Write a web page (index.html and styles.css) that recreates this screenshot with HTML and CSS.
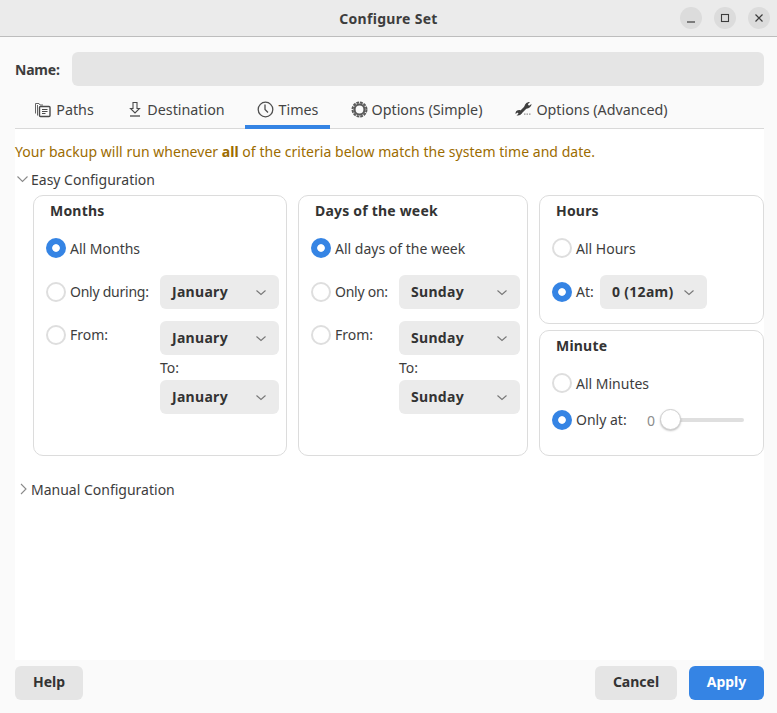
FILE: index.html
```html
<!DOCTYPE html>
<html lang="en">
<head>
    <meta charset="UTF-8">
    <meta name="viewport" content="width=device-width, initial-scale=1.0">
    <title>Configure Set</title>
    <link rel="stylesheet" href="styles.css">
</head>
<body>
    <header class="titlebar">
        <h1>Configure Set</h1>
        <div class="window-buttons">
            <span class="window-button"><svg width="16" height="16" viewBox="0 0 16 16"><path d="M4 12h8" stroke="#3d3d3d" stroke-width="1.2"/></svg></span>
            <span class="window-button"><svg width="16" height="16" viewBox="0 0 16 16"><rect x="4.5" y="4.5" width="7" height="7" fill="none" stroke="#3d3d3d" stroke-width="1.1"/></svg></span>
            <span class="window-button"><svg width="16" height="16" viewBox="0 0 16 16"><path d="M4.5 4.5l7 7M11.5 4.5l-7 7" stroke="#3d3d3d" stroke-width="1.2"/></svg></span>
        </div>
    </header>
    <main class="dialog">
        <div class="name-row">
            <label class="name-label">Name:</label>
            <div class="name-input"></div>
        </div>
        <nav class="tabs">
            <div class="tab tab-paths">
                <svg width="17" height="17" viewBox="0 0 17 17" fill="none" stroke="#666"><path d="M1.500 12.500v-10h3.500l1 1.500h3"/><path d="M3.500 14.500v-10.500"/><rect x="5.500" y="5.500" width="10.500" height="10" rx="1" stroke="#4a4a4a" stroke-width="1.4"/><path d="M8 8.500h5.500M8 10.500h5.500M8 12.500h3.500" stroke="#4a4a4a"/></svg>
                Paths
            </div>
            <div class="tab tab-destination">
                <svg width="14" height="17" viewBox="0 0 14 17" fill="none" stroke="#4a4a4a" stroke-width="1.1"><path d="M5 1.500h4v6h2.500L7 12 2.500 7.500H5z"/><path d="M2 15h10" stroke-width="1.3"/></svg>
                Destination
            </div>
            <div class="tab tab-times active">
                <svg width="17" height="17" viewBox="0 0 17 17" fill="none" stroke="#4f4f4f"><circle cx="8.500" cy="8.500" r="7.300" stroke-width="1.300"/><path d="M8 3.500v5l3 3" stroke-width="1.300"/></svg>
                Times
            </div>
            <div class="tab tab-simple">
                <svg width="17" height="17" viewBox="0 0 17 17" fill="none" stroke="#5a5a5a"><circle cx="8.500" cy="8.500" r="5" stroke-width="2.200"/><circle cx="8.500" cy="8.500" r="7" stroke-width="2" stroke-dasharray="2.800 .9"/></svg>
                Options (Simple)
            </div>
            <div class="tab tab-advanced">
                <svg width="17" height="17" viewBox="0 0 17 17" fill="#3f3f3f"><path d="M4.500 12.500l7-7" stroke="#3f3f3f" stroke-width="3"/><path d="M9.500 6C9.500 3 12 .8 15 1l-2.200 2.200L14 4.800 16.500 3c0 2.500-2.500 4.500-5 4.500z"/><path d="M7 11c-.2 2.500-2.500 4-5.500 3.500l2-1.700-1-1.300-2 1.500C.2 10.500 2 8.800 5 9z"/><path d="M9 12.500h1.500v1.200H9zM11.500 12.500H13v1.200h-1.500zM14 12.500h1.500v1.200H14z" opacity=".55"/></svg>
                Options (Advanced)
            </div>
        </nav>
        <section class="content">
            <p class="warning">Your backup will run whenever <b>all</b> of the criteria below match the system time and date.</p>
            <div class="expander expander-open">
                <svg class="chevron" width="13" height="8" viewBox="0 0 13 8" fill="none" stroke="#8a8a8a" stroke-width="1.1"><path d="M1.500 1.500l5 5 5-5"/></svg>
                Easy Configuration
            </div>
            <div class="panels">
                <div class="panel months">
                    <h2>Months</h2>
                    <div class="option first"><span class="radio checked"></span><span class="option-label">All Months</span></div>
                    <div class="option"><span class="radio"></span><span class="option-label tight">Only during:</span><div class="combo">January<svg width="12" height="7" viewBox="0 0 12 7" fill="none" stroke="#777" stroke-width="1.1"><path d="M1.500 1.500L6 5.500l4.500-4"/></svg></div></div>
                    <div class="option from"><span class="radio"></span><span class="option-label">From:</span><div class="combo">January<svg width="12" height="7" viewBox="0 0 12 7" fill="none" stroke="#777" stroke-width="1.1"><path d="M1.500 1.500L6 5.500l4.500-4"/></svg></div></div>
                    <div class="to-label">To:</div>
                    <div class="combo to-combo">January<svg width="12" height="7" viewBox="0 0 12 7" fill="none" stroke="#777" stroke-width="1.1"><path d="M1.500 1.500L6 5.500l4.500-4"/></svg></div>
                </div>
                <div class="panel days">
                    <h2>Days of the week</h2>
                    <div class="option first"><span class="radio checked"></span><span class="option-label">All days of the week</span></div>
                    <div class="option"><span class="radio"></span><span class="option-label tight">Only on:</span><div class="combo">Sunday<svg width="12" height="7" viewBox="0 0 12 7" fill="none" stroke="#777" stroke-width="1.1"><path d="M1.500 1.500L6 5.500l4.500-4"/></svg></div></div>
                    <div class="option from"><span class="radio"></span><span class="option-label">From:</span><div class="combo">Sunday<svg width="12" height="7" viewBox="0 0 12 7" fill="none" stroke="#777" stroke-width="1.1"><path d="M1.500 1.500L6 5.500l4.500-4"/></svg></div></div>
                    <div class="to-label">To:</div>
                    <div class="combo to-combo">Sunday<svg width="12" height="7" viewBox="0 0 12 7" fill="none" stroke="#777" stroke-width="1.1"><path d="M1.500 1.500L6 5.500l4.500-4"/></svg></div>
                </div>
                <div class="panel-stack">
                    <div class="panel hours">
                        <h2>Hours</h2>
                        <div class="option first"><span class="radio"></span><span class="option-label">All Hours</span></div>
                        <div class="option"><span class="radio checked"></span><span class="option-label">At:</span><div class="combo">0 (12am)<svg width="12" height="7" viewBox="0 0 12 7" fill="none" stroke="#777" stroke-width="1.1"><path d="M1.500 1.500L6 5.500l4.500-4"/></svg></div></div>
                    </div>
                    <div class="panel minute">
                        <h2>Minute</h2>
                        <div class="option first"><span class="radio"></span><span class="option-label">All Minutes</span></div>
                        <div class="option"><span class="radio checked"></span><span class="option-label">Only at:</span><span class="slider-value">0</span><div class="slider"><span class="slider-knob"></span></div></div>
                    </div>
                </div>
            </div>
            <div class="expander expander-closed">
                <svg class="chevron" width="7" height="12" viewBox="0 0 7 12" fill="none" stroke="#8a8a8a" stroke-width="1.1"><path d="M1 1l5 5-5 5"/></svg>
                Manual Configuration
            </div>
        </section>
    </main>
    <footer class="actions">
        <button class="btn btn-help">Help</button>
        <div class="actions-right">
            <button class="btn btn-cancel">Cancel</button>
            <button class="btn btn-apply">Apply</button>
        </div>
    </footer>
</body>
</html>
```

FILE: styles.css
```css
* {
    box-sizing: border-box;
}

body {
    font-family: "Noto Sans", sans-serif;
    font-size: 14px;
    margin: 0;
    padding: 0;
    width: 777px;
    height: 713px;
    overflow: hidden;
    display: flex;
    flex-direction: column;
    background-color: #fafafa;
    color: #3d3d3d;
}

.titlebar {
    height: 37px;
    flex: none;
    position: relative;
    display: flex;
    align-items: center;
    justify-content: center;
    background-color: #ebebeb;
    border-bottom: 1px solid #bdbdbd;
}

h1 {
    margin: 0;
    font-size: 14px;
    font-weight: 700;
    letter-spacing: 0.3px;
    color: #3d3d3d;
}

.window-buttons {
    position: absolute;
    right: 7px;
    top: 7px;
    display: flex;
    gap: 12px;
}

.window-button {
    width: 22px;
    height: 22px;
    border-radius: 50%;
    background-color: #dcdcdc;
    display: flex;
    align-items: center;
    justify-content: center;
}

.dialog {
    flex: 1;
    display: flex;
    flex-direction: column;
    padding: 15px 13px 0 15px;
    min-height: 0;
}

.name-row {
    display: flex;
    align-items: center;
    height: 34px;
}

.name-label {
    width: 57px;
    font-weight: 700;
    letter-spacing: -0.2px;
}

.name-input {
    flex: 1;
    height: 34px;
    border-radius: 6px;
    background-color: #e5e5e5;
}

.tabs {
    display: flex;
    gap: 8px;
    height: 43px;
    padding-left: 8px;
    border-bottom: 1px solid #d9d9d9;
}

.tab {
    flex: none;
    display: flex;
    align-items: center;
    justify-content: center;
    gap: 5px;
    height: 43px;
    padding-top: 4px;
    font-size: 14.3px;
    white-space: nowrap;
    color: #444;
}

.tab-paths {
    width: 82px;
    margin-right: 3px;
}

.tab-destination {
    width: 121px;
}

.tab-times {
    width: 85px;
}

.tab-simple {
    width: 157px;
    gap: 4px;
}

.tab-advanced {
    width: 177px;
    gap: 4px;
}

.tab.active {
    box-shadow: inset 0 -4px 0 #3584e4;
}

.content {
    flex: 1;
    background-color: #fff;
    min-height: 0;
}

.warning {
    margin: 0;
    padding-top: 13px;
    height: 38px;
    color: #9c6c00;
    line-height: 19px;
    letter-spacing: 0.035px;
}

.expander {
    display: flex;
    align-items: center;
    height: 20px;
}

.expander-open {
    margin-top: 2px;
}

.expander-open .chevron {
    margin: 0 2px 0 1px;
}

.expander-closed {
    margin-top: 23px;
}

.expander-closed .chevron {
    margin: 0 4px 0 5px;
}

.panels {
    display: grid;
    grid-template-columns: 254px 230px 225px;
    gap: 11px;
    margin: 6px 0 0 18px;
    height: 261px;
}

.panel-stack {
    display: flex;
    flex-direction: column;
    gap: 6px;
}

.panel {
    border: 1px solid #dcdcdc;
    border-radius: 10px;
    padding: 0 7px 0 12px;
    background-color: #fff;
}

.hours {
    height: 129px;
}

.minute {
    height: 126px;
}

h2 {
    margin: 0;
    padding: 5px 0 0 4px;
    height: 35px;
    font-size: 14px;
    line-height: 19px;
    font-weight: 700;
    letter-spacing: 0.2px;
    color: #333;
}

.option {
    display: flex;
    align-items: center;
    min-height: 34px;
    margin-top: 10px;
}

.option.first {
    margin-top: 0;
}

.minute .option {
    margin-top: 3px;
}

.minute .option.first {
    margin-top: 0;
}

.option.from {
    align-items: flex-start;
    margin-top: 12px;
}

.option.from .radio {
    margin-top: 4px;
}

.option.from .option-label {
    line-height: 27px;
}

.radio {
    flex: none;
    width: 20px;
    height: 20px;
    margin-right: 4px;
    border-radius: 50%;
    border: 2px solid #dedede;
    background-color: #fff;
}

.radio.checked {
    border: none;
    background: radial-gradient(circle, #fff 3.4px, #3584e4 4.2px);
}

.option-label {
    white-space: nowrap;
    padding-bottom: 1px;
}

.option.first .option-label {
    padding-bottom: 0;
}

.option-label.tight {
    letter-spacing: -0.25px;
}

.months .option-label {
    width: 90px;
}

.days .option-label {
    width: 64px;
}

.hours .option-label {
    width: 24px;
}

.hours .option.first .option-label {
    width: auto;
}

.minute .option-label {
    width: 71px;
}

.combo {
    flex: 1;
    height: 34px;
    display: flex;
    align-items: center;
    justify-content: space-between;
    padding: 0 12px 2px;
    border-radius: 6px;
    background-color: #ebebeb;
    font-weight: 700;
    letter-spacing: 0.3px;
    color: #333;
    white-space: nowrap;
}

.combo svg {
    margin-top: 2px;
}

.hours .combo {
    flex: none;
    width: 107px;
}

.to-label {
    height: 25px;
    line-height: 26px;
}

.months .to-label,
.months .to-combo {
    margin-left: 114px;
}

.days .to-label,
.days .to-combo {
    margin-left: 88px;
}

.slider-value {
    width: 13px;
    color: #8c8c8c;
}

.slider {
    position: relative;
    width: 84px;
    height: 4px;
    border-radius: 2px;
    background-color: #dfdfdf;
}

.slider-knob {
    position: absolute;
    left: 0;
    top: -9px;
    width: 21px;
    height: 21px;
    border-radius: 50%;
    border: 1px solid #d0d0d0;
    background-color: #fff;
    box-shadow: 0 1px 2px rgba(0, 0, 0, 0.25);
}

.actions {
    flex: none;
    height: 53px;
    padding: 6px 13px 0 15px;
    display: flex;
    justify-content: space-between;
    align-items: flex-start;
}

.actions-right {
    display: flex;
    gap: 12px;
}

.btn {
    height: 34px;
    border: none;
    border-radius: 6px;
    padding: 0 0 3px;
    font-family: inherit;
    font-size: 14px;
    font-weight: 700;
    color: #333;
    background-color: #e5e5e5;
}

.btn-help {
    width: 68px;
}

.btn-cancel {
    width: 82px;
}

.btn-apply {
    width: 75px;
    color: #fff;
    background-color: #3584e4;
}
```
